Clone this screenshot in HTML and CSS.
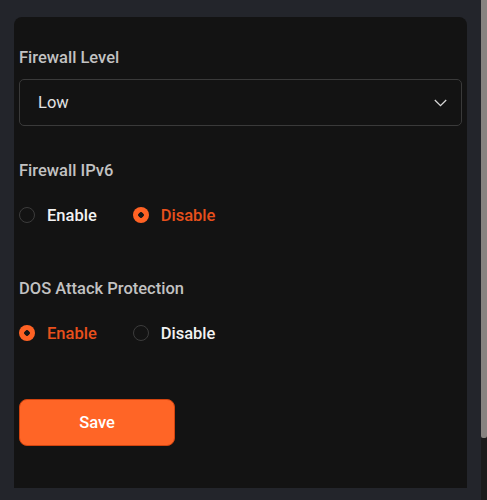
FILE: index.html
```html
<!DOCTYPE html>
<html lang="en">
<head>
<meta charset="utf-8">
<title>Firewall</title>
<link rel="stylesheet" href="styles.css">
</head>
<body>
<div class="card">
  <div class="label">Firewall Level</div>
  <div class="select">
    <span>Low</span>
    <svg class="chev" width="13" height="8" viewBox="0 0 13 8"><path d="M0.8 1l5.7 5.7 5.7-5.7" fill="none" stroke="#d8d8d8" stroke-width="1.3"/></svg>
  </div>

  <div class="label l2">Firewall IPv6</div>
  <div class="radios">
    <div class="opt"><span class="radio"></span><span class="txt">Enable</span></div>
    <div class="opt on"><span class="radio"></span><span class="txt">Disable</span></div>
  </div>

  <div class="label l3">DOS Attack Protection</div>
  <div class="radios">
    <div class="opt on"><span class="radio"></span><span class="txt">Enable</span></div>
    <div class="opt"><span class="radio"></span><span class="txt">Disable</span></div>
  </div>

  <button class="save">Save</button>
</div>
<div class="scroll"><div class="thumb"></div></div>
</body>
</html>
```
FILE: styles.css
```css
html, body { margin: 0; height: 100%; }
body {
  background: #23252b;
  font-family: Roboto, "Liberation Sans", sans-serif;
  padding: 17px 20px 0 14px;
  box-sizing: border-box;
  overflow: hidden;
}
.card {
  background: #131313;
  height: 471px;
  border-radius: 8px 8px 0 0;
  padding: 31px 5px 0 5px;
  box-sizing: border-box;
}
.label {
  color: #c2c2c2;
  font-size: 16.5px;
  font-weight: 500;
  line-height: 20px;
}
.select {
  margin-top: 11px;
  height: 47px;
  border: 1px solid #3a3a3a;
  border-radius: 5px;
  box-sizing: border-box;
  display: flex;
  align-items: center;
  justify-content: space-between;
  padding: 0 14px 0 18px;
  color: #e2e2e2;
  font-size: 16.5px;
}
.chev { margin-top: 1px; }
.l2 { margin-top: 35px; }
.l3 { margin-top: 54px; }
.radios {
  display: flex;
  gap: 36px;
  margin-top: 24px;
  height: 20px;
  align-items: center;
}
.opt {
  display: flex;
  align-items: center;
  gap: 12px;
  color: #f2f2f2;
  font-size: 16.5px;
  font-weight: 500;
}
.radio {
  width: 16px;
  height: 16px;
  border-radius: 50%;
  border: 1.5px solid #3c3c3c;
  box-sizing: border-box;
}
.opt.on .radio {
  border: none;
  background: radial-gradient(circle, #161616 0 2.5px, #ff6224 3px);
}
.opt.on .txt { color: #e8501c; }
.save {
  display: block;
  margin-top: 56px;
  width: 156px;
  height: 47px;
  background: #ff6526;
  border: 1px solid #d2440f;
  border-radius: 8px;
  color: #fff;
  font-family: Roboto, "Liberation Sans", sans-serif;
  font-size: 16.5px;
  font-weight: 500;
}
.scroll {
  position: fixed;
  top: 0;
  right: 0;
  width: 6px;
  height: 100%;
  background: #1b1b1b;
}
.thumb {
  height: 438px;
  background: #878380;
  border-radius: 0 0 2px 2px;
}
```
